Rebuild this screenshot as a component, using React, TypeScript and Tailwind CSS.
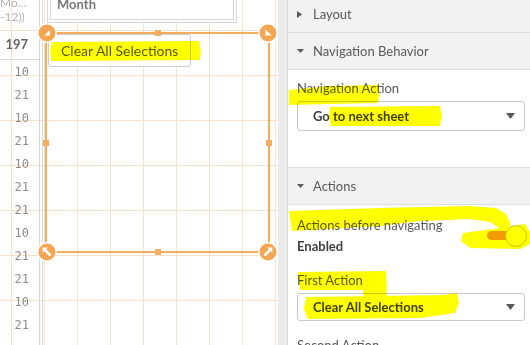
const rows = ["10", "21", "10", "21", "10", "21", "21", "10", "21", "21", "10", "21"];

function Caret({ open }: { open: boolean }) {
  return (
    <div className="flex w-[8px] items-center">
      {open ? (
        <svg width="7" height="4" viewBox="0 0 7 4">
          <path d="M0 0h7L3.5 4z" fill="#595959" />
        </svg>
      ) : (
        <svg width="5" height="7" viewBox="0 0 5 7">
          <path d="M0 0l5 3.5L0 7z" fill="#595959" />
        </svg>
      )}
    </div>
  );
}

function Header({ label, open, className }: { label: string; open: boolean; className: string }) {
  return (
    <div className={"flex shrink-0 items-center gap-[8px] bg-[#f2f2f2] pl-[9px] " + className}>
      <Caret open={open} />
      <span>{label}</span>
    </div>
  );
}

function Select({ value, className }: { value: string; className: string }) {
  return (
    <div
      className={
        "flex items-center justify-between rounded-[3px] border border-[#c9c9c9] pl-[15px] pr-[9px] font-bold text-[#404040] " +
        className
      }
    >
      <span>{value}</span>
      <svg width="9" height="6" viewBox="0 0 9 6">
        <path d="M0 0h9L4.5 6z" fill="#595959" />
      </svg>
    </div>
  );
}

function Handle({ kind, className }: { kind: "tl" | "tr" | "bl" | "br"; className: string }) {
  return (
    <svg className={"absolute " + className} width="20" height="20" viewBox="0 0 20 20">
      <circle cx="10" cy="10" r="9.2" fill="#f4a652" stroke="#fff" strokeWidth="1.4" />
      {kind === "tl" && <path d="M12.8 7.2V12.6H7.4Z" fill="#fff" />}
      {kind === "tr" && <path d="M7.4 6.4L13.6 12.6H7.4Z" fill="#fff" />}
      {kind === "bl" && (
        <>
          <path d="M7 7L13.5 13.5" stroke="#fff" strokeWidth="2.6" />
          <path d="M5.6 5.6h5.2L5.6 10.8z" fill="#fff" />
        </>
      )}
      {kind === "br" && (
        <>
          <path d="M6.5 13.5L13 7" stroke="#fff" strokeWidth="2.6" />
          <path d="M14.4 5.6v5.2L9.2 5.6z" fill="#fff" />
        </>
      )}
    </svg>
  );
}

function Canvas() {
  return (
    <div className="relative flex h-full w-[287px] shrink-0">
      <svg className="absolute left-0 top-0" width="278" height="345">
        <defs>
          <pattern id="grid" x="11" y="30" width="33" height="45" patternUnits="userSpaceOnUse">
            <path d="M0 0.5H33M0.5 0V45" stroke="#f6e1cb" strokeWidth="1" fill="none" />
          </pattern>
        </defs>
        <rect width="278" height="345" fill="url(#grid)" />
      </svg>

      <div className="relative w-[40px] shrink-0 border-r border-[#d6d6d6]">
        <div className="h-[30px] overflow-hidden text-[12px] leading-[14px] text-[#b3b3b3]">
          <div className="-mt-[4px]">Mo...</div>
          <div>-12))</div>
        </div>
        <div className="flex h-[30px] items-center justify-end border-b border-[#dcdcdc] pr-[11px] text-[13px] font-bold text-[#666]">
          197
        </div>
        {rows.map((r, i) => (
          <div
            key={i}
            className="flex h-[23px] items-center justify-end pr-[10px] font-['DejaVu_Sans_Mono',monospace] text-[12px] text-[#8c8c8c]"
          >
            {r}
          </div>
        ))}
      </div>
      <div className="relative w-[3px] shrink-0 border-r border-[#dcdcdc]" />

      <div className="relative w-[235px] shrink-0">
        <div className="ml-[4px] h-[23px] w-[190px] border-x border-b border-[#d8d8d8] bg-white px-[2px] pb-[2px]">
          <div className="h-full overflow-hidden border-x border-b border-[#d8d8d8] pl-[6px] text-[13px] font-bold leading-[14px] text-[#777]">
            <div className="-mt-[3px]">Month</div>
          </div>
        </div>

        <div className="relative ml-[2px] mt-[9px] h-[221px] w-[225px] border-2 border-[#f3ad5d]">
          <div className="ml-[1px] flex h-[33px] w-[143px] items-center rounded-[3px] border border-[#cdcdcd] bg-white pl-[12px] text-[14px] text-[#595959]">
            Clear All Selections
          </div>

          <div className="absolute -top-[4px] left-1/2 h-[6px] w-[6px] -translate-x-1/2 bg-[#f3ad5d]" />
          <div className="absolute -bottom-[4px] left-1/2 h-[6px] w-[6px] -translate-x-1/2 bg-[#f3ad5d]" />
          <div className="absolute -left-[4px] top-1/2 h-[6px] w-[6px] -translate-y-1/2 bg-[#f3ad5d]" />
          <div className="absolute -right-[4px] top-1/2 h-[6px] w-[6px] -translate-y-1/2 bg-[#f3ad5d]" />

          <Handle kind="tl" className="-left-[10px] -top-[11px]" />
          <Handle kind="tr" className="-right-[10px] -top-[11px]" />
          <Handle kind="bl" className="-bottom-[11px] -left-[10px]" />
          <Handle kind="br" className="-bottom-[11px] -right-[10px]" />
        </div>
      </div>

      <div className="w-[9px] shrink-0 bg-[#ebebeb]" />
    </div>
  );
}

function Panel() {
  return (
    <div className="flex h-full w-[243px] shrink-0 flex-col overflow-hidden border-l border-[#d9d9d9] bg-white text-[13px] leading-[18px] text-[#595959]">
      <Header label="Layout" open={false} className="h-[33px] border-b border-[#dcdcdc] pb-[4px]" />
      <Header label="Navigation Behavior" open className="h-[37px] border-b border-[#dcdcdc]" />

      <div className="h-[97px] shrink-0 pl-[9px] pr-[5px] pt-[9px]">
        <div>Navigation Action</div>
        <Select value="Go to next sheet" className="mt-[4px] h-[30px]" />
      </div>

      <Header label="Actions" open className="h-[38px] border-y border-[#dcdcdc]" />

      <div className="shrink-0 pl-[9px] pr-[5px] pt-[11px]">
        <div className="flex items-center justify-between">
          <div>
            <div>Actions before navigating</div>
            <div className="mt-[3px] font-bold text-[#404040]">Enabled</div>
          </div>
          <div className="relative -mr-[2px] h-[22px] w-[40px]">
            <div className="absolute left-0 top-[6px] h-[9px] w-[30px] rounded-full bg-[#f29b1d]" />
            <div className="absolute right-0 top-0 h-[22px] w-[22px] rounded-full border border-[#c2c2c2] bg-white" />
          </div>
        </div>
        <div className="mt-[16px]">First Action</div>
        <Select value="Clear All Selections" className="mt-[4px] h-[28px]" />
        <div className="mt-[15px]">Second Action</div>
      </div>
    </div>
  );
}

function Highlights() {
  return (
    <svg className="pointer-events-none absolute left-0 top-0 mix-blend-multiply" width="530" height="345">
      <g fill="#ffff00">
        <path d="M52 42L199 41L201 50L200 60L51 61L50 50Z" />
        <path d="M289 90L330 86L378 85L379 95L378 103L330 104L289 105Z" />
        <path d="M330 107L440 106L442 116L440 126L331 126L329 116Z" />
        <path d="M289 211L380 208L470 206L496 208L506 214L511 225L502 230L490 222L470 219L420 221L380 226L292 231Z" />
        <path d="M463 233L500 228L525 224L530 232L530 244L520 249L470 248L461 241Z" />
        <path d="M298 272L386 271L387 290L300 290Z" />
        <path d="M362 286L386 285L387 299L364 298Z" />
        <path d="M306 297L444 295L457 293L459 303L455 313L420 318L308 319L304 309Z" />
      </g>
    </svg>
  );
}

export default function App() {
  return (
    <div className="relative flex h-[345px] w-[530px] overflow-hidden bg-white font-['Lato',sans-serif]">
      <Canvas />
      <Panel />
      <Highlights />
    </div>
  );
}
